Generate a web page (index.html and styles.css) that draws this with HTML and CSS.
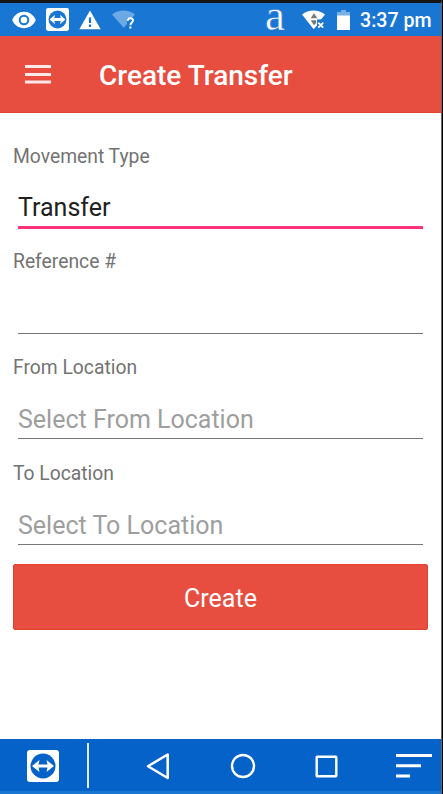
FILE: index.html
```html
<!DOCTYPE html>
<html lang="en">
<head>
  <meta charset="UTF-8" />
  <meta name="viewport" content="width=device-width, initial-scale=1.0" />
  <title>Create Transfer</title>
  <link rel="stylesheet" href="styles.css">
</head>
<body>
  <div class="screen">
    <div class="status-bar">
      <svg class="icon-eye" width="24" height="18" viewBox="0 0 24 18">
        <path fill="#fff" fill-rule="evenodd" d="M12 .8C6.800.8 2.200 4 .2 9c2 5 6.600 8.200 11.800 8.200S21.800 14 23.800 9C21.800 4 17.200.8 12 .8zM12 14.300a5.300 5.300 0 1 1 0-10.600 5.300 5.300 0 0 1 0 10.600zM12 5.700a3.300 3.300 0 1 0 0 6.600 3.300 3.300 0 0 0 0-6.600z" />
      </svg>
      <svg class="icon-viewer" width="23" height="23" viewBox="0 0 32 32">
        <rect width="32" height="32" rx="3" fill="#fff" />
        <circle cx="16" cy="16" r="12.500" fill="#1976d2" />
        <path fill="#fff" d="M5 16l7.500-6.500-1 4.500h9l-1-4.500L27 16l-7.500 6.500 1-4.500h-9l1 4.500z" />
      </svg>
      <svg class="icon-warning" width="22" height="20" viewBox="0 0 22 20">
        <path fill="#fff" fill-rule="evenodd" d="M11 .5L.3 19.300h21.400zM9.900 7.500h2.200v5.400H9.900zM9.900 14.500h2.200v2.400H9.900z" />
      </svg>
      <svg class="icon-wifi-unknown" width="24" height="20" viewBox="0 0 24 20">
        <path fill="#6ba8e5" d="M0 4.500C6.500-1 16.500-1 23 4.500L20 8h-5v6l-3.300 3.800z" />
        <path fill="none" stroke="#fff" stroke-width="1.900" d="M15.800 10.800c0-3.600 5.200-3.300 5.200-.3 0 2-2.600 2.200-2.600 4.800" />
        <path fill="#fff" d="M17.400 16.500h2v2h-2z" />
      </svg>
      <span class="carrier">a</span>
      <svg class="icon-wifi" width="24" height="20" viewBox="0 0 24 20">
        <path fill="#fff" d="M0 4.500C6.500-1 16.500-1 23 4.500L19 9.500h-4v6l-3.300 3.800z" />
        <path fill="#777" d="M12 3.200l3.300 5H8.700zM12 15.200l-3.300-5H14v3z" />
        <path fill="none" stroke="#fff" stroke-width="1.800" d="M16.200 12.700l5 5M21.200 12.700l-5 5" />
      </svg>
      <svg class="icon-battery" width="13" height="20" viewBox="0 0 13 20">
        <path fill="#78b0e8" d="M4 0h5v2h4v4H0V2h4z" />
        <path fill="#fff" d="M0 5.500h13V20H0z" />
      </svg>
      <span class="clock">3:37 pm</span>
    </div>

    <div class="toolbar">
      <svg class="icon-menu" width="26" height="19" viewBox="0 0 26 19">
        <path fill="#fff" fill-opacity=".88" d="M0 0h26v3H0zM0 8h26v3H0zM0 15.500h26v3H0z" />
      </svg>
      <h1>Create Transfer</h1>
    </div>

    <div class="form">
      <div class="form-group">
        <label for="movementType">Movement Type</label>
        <input type="text" class="active" id="movementType" value="Transfer" />
      </div>
      <div class="form-group">
        <label for="reference">Reference #</label>
        <input type="text" id="reference" />
      </div>
      <div class="form-group">
        <label for="fromLocation">From Location</label>
        <input type="text" id="fromLocation" placeholder="Select From Location" />
      </div>
      <div class="form-group">
        <label for="toLocation">To Location</label>
        <input type="text" id="toLocation" placeholder="Select To Location" />
      </div>
      <button>Create</button>
    </div>

    <div class="nav-bar">
      <svg class="nav-viewer" width="32" height="32" viewBox="0 0 32 32">
        <rect width="32" height="32" rx="3" fill="#fff" />
        <circle cx="16" cy="16" r="12.500" fill="#0562c8" />
        <path fill="#fff" d="M5 16l7.500-6-1 4.500h9l-1-4.500 7.500 6-7.500 6 1-4.500h-9l1 4.500z" />
      </svg>
      <div class="nav-divider"></div>
      <svg class="nav-back" width="24" height="28" viewBox="0 0 24 28">
        <path fill="none" stroke="#fff" stroke-width="2.500" stroke-linejoin="round" d="M21.700 2.500v23.500L2 14.200z" />
      </svg>
      <svg class="nav-home" width="26" height="26" viewBox="0 0 26 26">
        <circle cx="13" cy="13" r="11" fill="none" stroke="#fff" stroke-width="2.400" />
      </svg>
      <svg class="nav-recent" width="23" height="23" viewBox="0 0 23 23">
        <rect x="1.700" y="1.700" width="19.600" height="19.600" rx=".5" fill="none" stroke="#fff" stroke-width="2.400" />
      </svg>
      <svg class="nav-more" width="36" height="24" viewBox="0 0 36 24">
        <path fill="#fff" d="M0 0h36v3H0zM0 10.300h25v3H0zM0 20.600h14v3H0z" />
      </svg>
    </div>
  </div>
</body>
</html>
```

FILE: styles.css
```css
* {
  box-sizing: border-box;
}

body {
  margin: 0;
  font-family: Roboto, "Liberation Sans", sans-serif;
  background: #000;
}

.screen {
  display: flex;
  flex-direction: column;
  width: 442px;
  height: 794px;
  background: #fff;
  border-top: 3px solid #161616;
  border-right: 1px solid #666;
}

.status-bar {
  display: flex;
  align-items: center;
  height: 33px;
  padding-left: 12px;
  background: #1976d2;
  color: #fff;
}

.icon-viewer {
  margin-left: 10px;
}

.icon-warning {
  margin-left: 10px;
}

.icon-wifi-unknown {
  margin-left: 11px;
}

.carrier {
  width: 21px;
  margin: -8px 0 0 129px;
  font-family: "Liberation Serif", serif;
  font-size: 45px;
  line-height: 33px;
  -webkit-text-stroke: 0.5px #1976d2;
}

.icon-wifi {
  margin-left: 16px;
}

.icon-battery {
  margin-left: 11px;
}

.clock {
  margin: 1px 0 0 10px;
  font-size: 19.6px;
  font-weight: 500;
  white-space: nowrap;
}

.toolbar {
  display: flex;
  align-items: center;
  height: 77px;
  padding: 0 25px;
  background: #e74e40;
  border-bottom: 1px solid #e4402f;
}

h1 {
  margin: 3px 0 0 48px;
  color: #fff;
  font-size: 28px;
  font-weight: 500;
  white-space: nowrap;
}

.form {
  flex: 1;
  padding: 31.6px 13px 0;
}

.form-group {
  height: 105.8px;
}

label {
  display: block;
  color: #737373;
  font-size: 19.3px;
  line-height: 24px;
}

input {
  display: block;
  width: 405px;
  height: 39.5px;
  margin: 19.8px 0 0 5px;
  padding: 0;
  border: none;
  border-bottom: 1.5px solid #777;
  border-radius: 0;
  outline: none;
  background: none;
  color: #212121;
  font-family: inherit;
  font-size: 25px;
}

input.active {
  height: 41px;
  border-bottom: 3px solid #ff3377;
}

input::placeholder {
  color: #9e9e9e;
  opacity: 1;
}

button {
  display: block;
  width: 415px;
  height: 66px;
  margin-top: -3.8px;
  padding: 3px 0 0;
  background: #e74e40;
  color: #fff;
  border: 1px solid #e4402f;
  border-radius: 2px;
  font-family: inherit;
  font-size: 25px;
}

.nav-bar {
  display: flex;
  align-items: center;
  height: 55px;
  padding-left: 27px;
  background: #0562c8;
  border-bottom: 3px solid #1976d2;
}

.nav-viewer {
  margin-top: 2px;
}

.nav-divider {
  width: 2px;
  height: 45px;
  margin-left: 28px;
  background: #e0ecf8;
}

.nav-back {
  margin: 1px 0 0 57px;
}

.nav-home {
  margin: 2px 0 0 60px;
}

.nav-recent {
  margin: 2px 0 0 59px;
}

.nav-more {
  margin: 1px 0 0 58px;
}
```
